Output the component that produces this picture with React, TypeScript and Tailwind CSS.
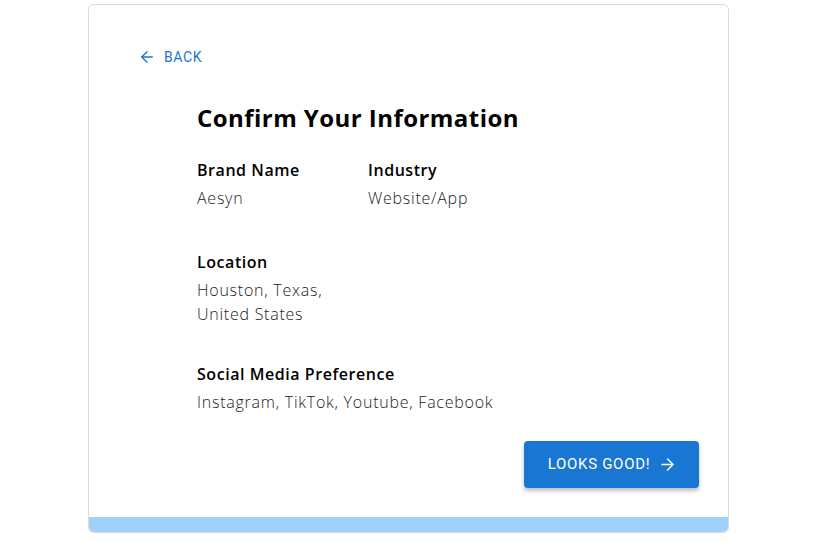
import { ArrowLeft, ArrowRight } from "lucide-react";

const fields = [
  { label: "Brand Name", value: ["Aesyn"] },
  { label: "Industry", value: ["Website/App"] },
];

function Field({ label, value }: { label: string; value: string[] }) {
  return (
    <div>
      <div className="text-[16px] leading-6 font-semibold tracking-[0.55px] text-black">{label}</div>
      <div className="mt-1 text-[16px] leading-6 font-light tracking-[0.75px] text-[#222]">
        {value.map((line) => (
          <div key={line}>{line}</div>
        ))}
      </div>
    </div>
  );
}

export default function App() {
  return (
    <div className="min-h-[542px] bg-white pt-[4px]">
      <div className="ml-[88px] w-[641px] overflow-hidden rounded-md border border-[#dcdcdc] bg-white">
        <div className="px-[51px] pt-[40px] pb-[29px]">
          <button
            className="-ml-[2px] flex h-6 items-center gap-[8px] text-[14px] uppercase tracking-[0.6px] text-[#1976d2]"
            style={{ fontFamily: "Roboto, sans-serif" }}
          >
            <ArrowLeft size={18} strokeWidth={1.8} />
            Back
          </button>

          <div className="ml-[57px]" style={{ fontFamily: "'Open Sans', sans-serif" }}>
            <h1 className="mt-[33px] text-[24px] leading-8 font-bold tracking-[0.45px] text-black">
              Confirm Your Information
            </h1>

            <div className="mt-6 grid grid-cols-[171px_1fr]">
              {fields.map((f) => (
                <Field key={f.label} label={f.label} value={f.value} />
              ))}
            </div>

            <div className="mt-10">
              <Field label="Location" value={["Houston, Texas,", "United States"]} />
            </div>

            <div className="mt-9">
              <Field
                label="Social Media Preference"
                value={["Instagram, TikTok, Youtube, Facebook"]}
              />
            </div>
          </div>

          <div className="mt-[27px] flex justify-end">
            <button
              className="mr-[-22px] flex h-[47px] w-[175px] items-center justify-center gap-[8px] rounded bg-[#1976d2] pl-[2px] text-[15px] font-normal uppercase tracking-[0.7px] text-white shadow-[0_3px_4px_rgba(0,0,0,0.25)]"
              style={{ fontFamily: "Roboto, sans-serif" }}
            >
              Looks Good!
              <ArrowRight size={19} strokeWidth={1.8} />
            </button>
          </div>
        </div>
        <div className="h-[15px] bg-[#9fd1fb]" />
      </div>
    </div>
  );
}
